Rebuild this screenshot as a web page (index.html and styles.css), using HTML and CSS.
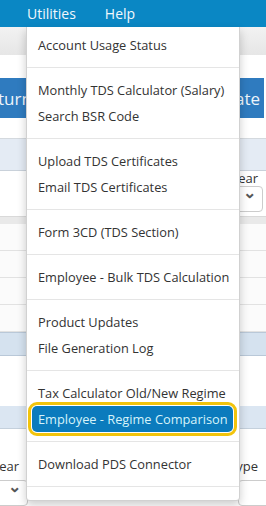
FILE: index.html
```html
<!DOCTYPE html>
<html lang="en">
<head>
    <meta charset="UTF-8">
    <meta name="viewport" content="width=device-width, initial-scale=1.0">
    <title>Utilities Menu</title>
    <link rel="stylesheet" href="styles.css">
</head>
<body>
    <header class="topbar">
        <a class="nav-link" href="#">Utilities</a>
        <a class="nav-link" href="#">Help</a>
    </header>

    <!-- page content behind the open menu -->
    <div class="page">
        <div class="band-gray"></div>
        <div class="spacer-23"></div>
        <div class="btn-row">
            <span class="btn">Return</span>
            <span class="btn">Generate</span>
        </div>
        <div class="spacer-20"></div>
        <div class="band-blue"></div>
        <div class="filter-row">
            <span class="filter-label">Year</span>
            <span class="select"><span class="chev">&#8964;</span></span>
        </div>
        <div class="band-thin"></div>
        <div class="grid-row"></div>
        <div class="grid-row"></div>
        <div class="grid-row"></div>
        <div class="grid-row"></div>
        <div class="band-blue2"></div>
        <div class="spacer-50"></div>
        <div class="band-blue3"></div>
        <div class="filter-row2">
            <span class="label-left">Year</span>
            <span class="label-right">Type</span>
        </div>
        <div class="select-row">
            <span class="select select-left"><span class="chev">&#8964;</span></span>
            <span class="select select-right"></span>
        </div>
    </div>

    <ul class="dropdown-menu">
        <li><a href="#">Account Usage Status</a></li>
        <li class="divider"></li>
        <li><a href="#">Monthly TDS Calculator (Salary)</a></li>
        <li><a href="#">Search BSR Code</a></li>
        <li class="divider"></li>
        <li><a href="#">Upload TDS Certificates</a></li>
        <li><a href="#">Email TDS Certificates</a></li>
        <li class="divider"></li>
        <li><a href="#">Form 3CD (TDS Section)</a></li>
        <li class="divider"></li>
        <li><a href="#">Employee - Bulk TDS Calculation</a></li>
        <li class="divider"></li>
        <li><a href="#">Product Updates</a></li>
        <li><a href="#">File Generation Log</a></li>
        <li class="divider"></li>
        <li><a href="#">Tax Calculator Old/New Regime</a></li>
        <li class="active"><a href="#">Employee - Regime Comparison</a></li>
        <li class="divider"></li>
        <li><a href="#">Download PDS Connector</a></li>
        <li class="divider"></li>
    </ul>
</body>
</html>
```

FILE: styles.css
```css
body {
    margin: 0;
    width: 266px;
    height: 506px;
    overflow: hidden;
    position: relative;
    font-family: "Open Sans", "Noto Sans", sans-serif;
    background-color: #fff;
    color: #333;
}
.page {
    overflow: hidden;
}
.topbar {
    height: 27px;
    background-color: #0a87c4;
    display: flex;
    align-items: center;
    gap: 29px;
    padding-left: 27px;
}
.nav-link {
    color: #f2f8fc;
    text-decoration: none;
    font-size: 14px;
    line-height: 20px;
}
.band-gray {
    height: 28px;
    background: linear-gradient(#f2f2f2, #e6e6e6);
}
.spacer-23 {
    height: 23px;
}
.spacer-20 {
    height: 20px;
    border-bottom: 1px solid #d4d9de;
}
.spacer-50 {
    height: 50px;
}
.btn-row {
    height: 40px;
    display: flex;
    justify-content: space-between;
    margin: 0 2px 0 -30px;
}
.btn {
    background-color: #2f7bbf;
    color: #eef4fa;
    font-size: 17px;
    display: flex;
    align-items: center;
    padding: 0 4px 0 8px;
}
.band-blue {
    height: 31px;
    background-color: #e4ebf4;
    border-bottom: 1px solid #c9d1da;
}
.filter-row {
    height: 45px;
    position: relative;
    border-bottom: 1px solid #d9d9d9;
}
.filter-label {
    position: absolute;
    right: 8px;
    top: -2px;
    font-size: 13px;
}
.select {
    display: block;
    border: 1px solid #ccc;
    border-radius: 4px;
    background: #fff;
    height: 24px;
}
.filter-row .select {
    position: absolute;
    right: 3px;
    top: 15px;
    width: 40px;
}
.chev {
    position: absolute;
    right: 6px;
    top: -6px;
    font-size: 16px;
    color: #555;
    font-weight: bold;
}
.band-thin {
    height: 7px;
    background-color: #e9e9e9;
}
.grid-row {
    height: 26px;
    border-bottom: 1px solid #e2e2e2;
    background: #fbfbfb;
}
.band-blue2 {
    height: 22px;
    background-color: #d5e2ef;
    border-top: 1px solid #b9c8d8;
    border-bottom: 1px solid #b9c8d8;
}
.band-blue3 {
    height: 22px;
    background-color: #dbe6f2;
    border-bottom: 1px solid #c4d0dc;
}
.filter-row2 {
    height: 28px;
    margin-top: 23px;
    display: flex;
    justify-content: space-between;
    align-items: center;
    font-size: 13px;
    padding-right: 8px;
}
.label-left {
    margin-left: -8px;
}
.select-row {
    display: flex;
    justify-content: space-between;
    margin: 0 -10px 0 -10px;
}
.select-left {
    position: relative;
    width: 36px;
}
.select-right {
    width: 36px;
}
.dropdown-menu {
    position: absolute;
    top: 27px;
    left: 26px;
    width: 212px;
    margin: 0;
    padding: 5px 0 4px;
    list-style: none;
    background-color: #fff;
    border: 1px solid rgba(0, 0, 0, 0.18);
    border-top: none;
    border-radius: 0 0 4px 4px;
    box-shadow: 0 4px 10px rgba(0, 0, 0, 0.2);
}
.dropdown-menu li a {
    display: block;
    margin: 0 6px 0 5px;
    padding: 3px 6px;
    font-size: 12.8px;
    line-height: 20px;
    color: #333;
    text-decoration: none;
    white-space: nowrap;
    border-radius: 5px;
}
.dropdown-menu .divider {
    height: 1px;
    margin: 9px 0;
    background-color: #e5e5e5;
}
.dropdown-menu .active a {
    background-color: #0b7bbd;
    color: #d6f3fa;
    outline: 3px solid #f2c40c;
    outline-offset: 1px;
}
```
